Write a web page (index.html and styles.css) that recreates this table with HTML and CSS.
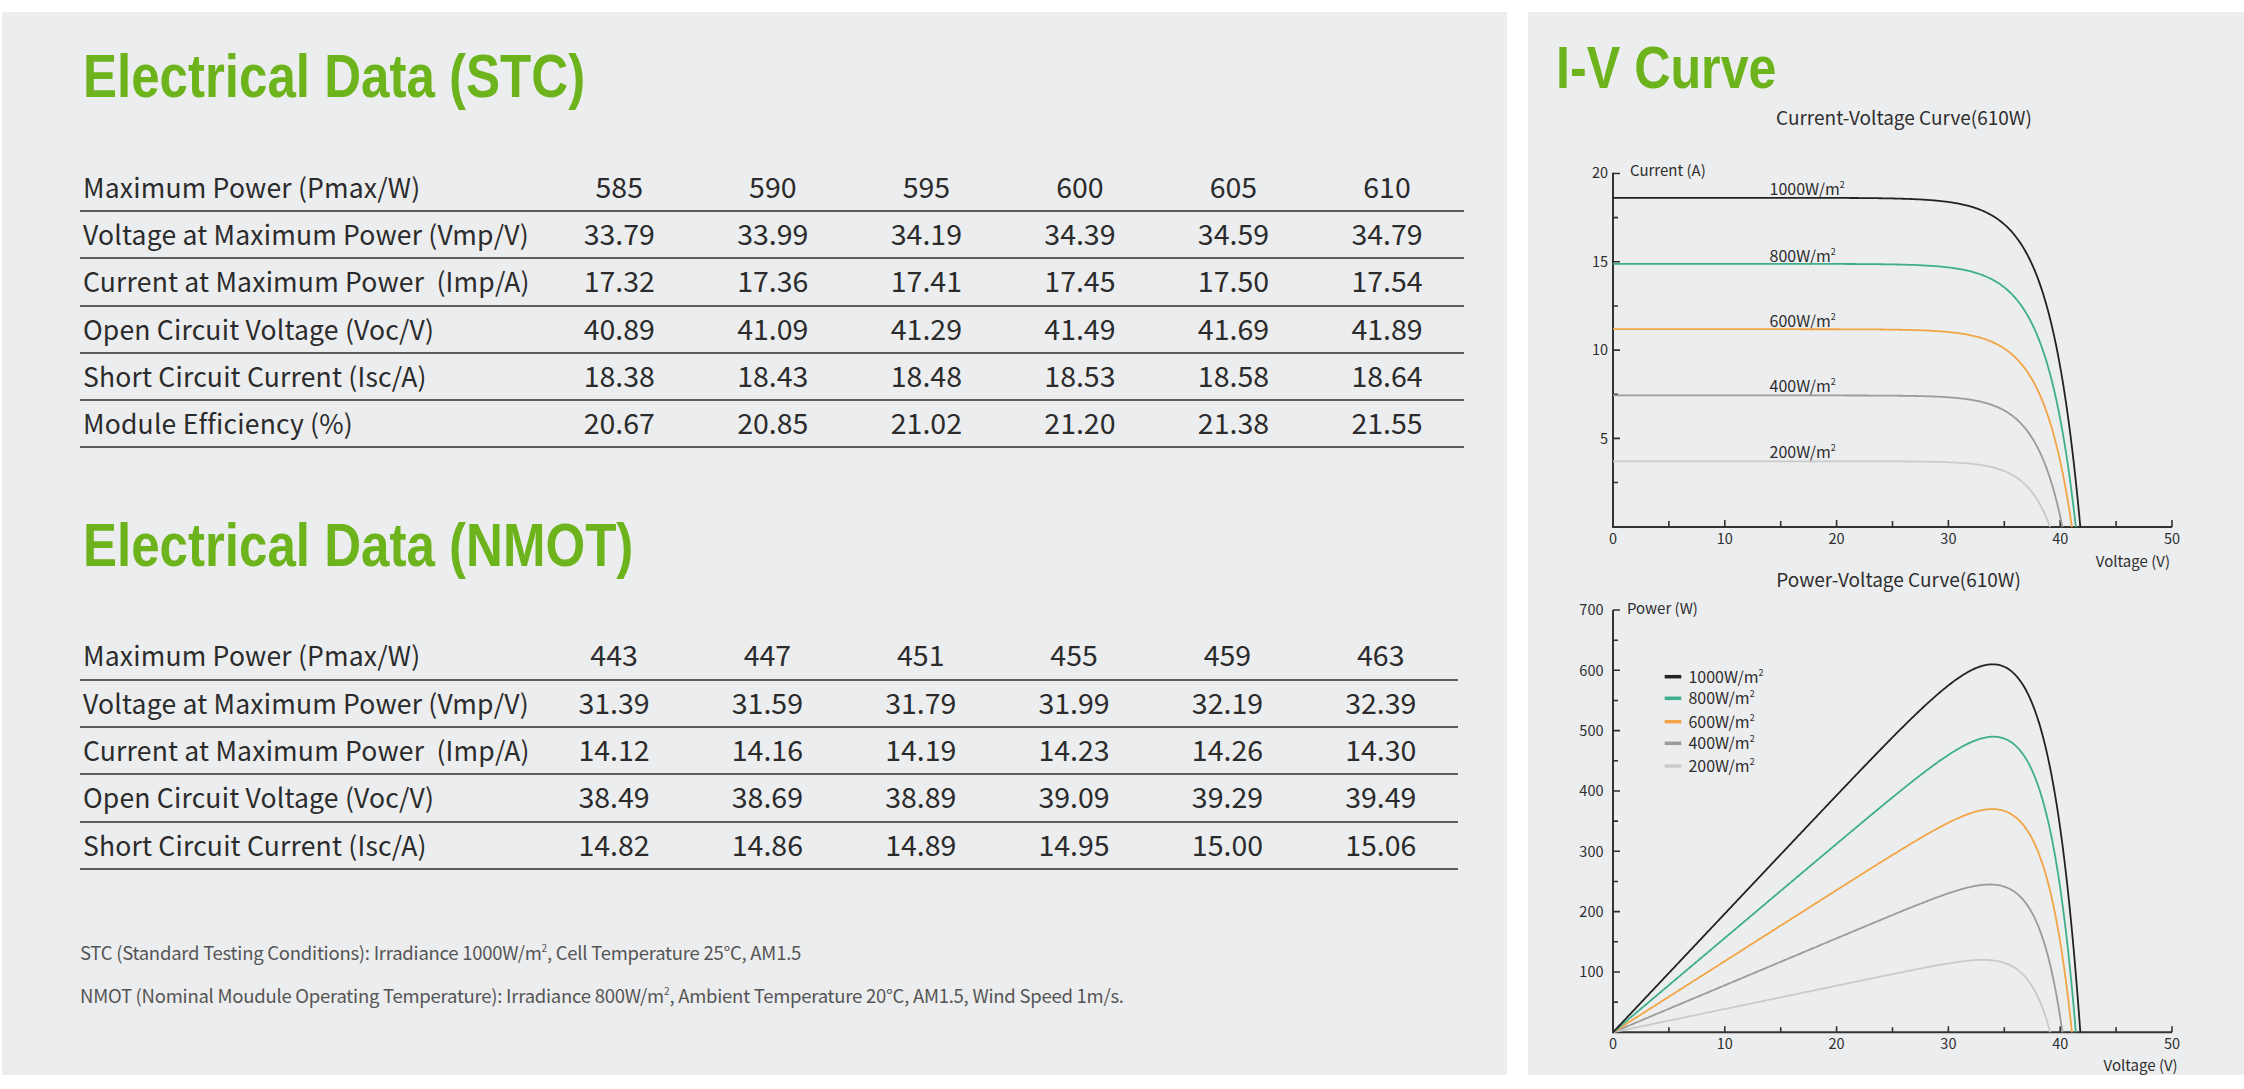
FILE: index.html
```html
<!DOCTYPE html>
<html lang="en">
<head>
<meta charset="utf-8">
<title>Electrical Data</title>
<link rel="stylesheet" href="styles.css">
</head>
<body>
<main class="page">
  <section class="panel panel-data">
    <h1 class="title">Electrical Data (STC)</h1>
    <div class="spec spec-stc">
      <div class="row"><span class="label">Maximum Power (Pmax/W)</span><span class="val">585</span><span class="val">590</span><span class="val">595</span><span class="val">600</span><span class="val">605</span><span class="val">610</span></div>
      <div class="row"><span class="label">Voltage at Maximum Power (Vmp/V)</span><span class="val">33.79</span><span class="val">33.99</span><span class="val">34.19</span><span class="val">34.39</span><span class="val">34.59</span><span class="val">34.79</span></div>
      <div class="row"><span class="label">Current at Maximum Power  (Imp/A)</span><span class="val">17.32</span><span class="val">17.36</span><span class="val">17.41</span><span class="val">17.45</span><span class="val">17.50</span><span class="val">17.54</span></div>
      <div class="row"><span class="label">Open Circuit Voltage (Voc/V)</span><span class="val">40.89</span><span class="val">41.09</span><span class="val">41.29</span><span class="val">41.49</span><span class="val">41.69</span><span class="val">41.89</span></div>
      <div class="row"><span class="label">Short Circuit Current (Isc/A)</span><span class="val">18.38</span><span class="val">18.43</span><span class="val">18.48</span><span class="val">18.53</span><span class="val">18.58</span><span class="val">18.64</span></div>
      <div class="row"><span class="label">Module Efficiency (%)</span><span class="val">20.67</span><span class="val">20.85</span><span class="val">21.02</span><span class="val">21.20</span><span class="val">21.38</span><span class="val">21.55</span></div>
    </div>

    <h1 class="title title-nmot">Electrical Data (NMOT)</h1>
    <div class="spec spec-nmot">
      <div class="row"><span class="label">Maximum Power (Pmax/W)</span><span class="val">443</span><span class="val">447</span><span class="val">451</span><span class="val">455</span><span class="val">459</span><span class="val">463</span></div>
      <div class="row"><span class="label">Voltage at Maximum Power (Vmp/V)</span><span class="val">31.39</span><span class="val">31.59</span><span class="val">31.79</span><span class="val">31.99</span><span class="val">32.19</span><span class="val">32.39</span></div>
      <div class="row"><span class="label">Current at Maximum Power  (Imp/A)</span><span class="val">14.12</span><span class="val">14.16</span><span class="val">14.19</span><span class="val">14.23</span><span class="val">14.26</span><span class="val">14.30</span></div>
      <div class="row"><span class="label">Open Circuit Voltage (Voc/V)</span><span class="val">38.49</span><span class="val">38.69</span><span class="val">38.89</span><span class="val">39.09</span><span class="val">39.29</span><span class="val">39.49</span></div>
      <div class="row"><span class="label">Short Circuit Current (Isc/A)</span><span class="val">14.82</span><span class="val">14.86</span><span class="val">14.89</span><span class="val">14.95</span><span class="val">15.00</span><span class="val">15.06</span></div>
    </div>

    <div class="notes">
      <p>STC (Standard Testing Conditions): Irradiance 1000W/m<sup>2</sup>, Cell Temperature 25°C, AM1.5</p>
      <p>NMOT (Nominal Moudule Operating Temperature): Irradiance 800W/m<sup>2</sup>, Ambient Temperature 20°C, AM1.5, Wind Speed 1m/s.</p>
    </div>
  </section>

  <section class="panel panel-curves">
    <h2 class="title title-iv">I-V Curve</h2>
    <svg class="charts" width="716" height="975" viewBox="1528 100 716 975" xmlns="http://www.w3.org/2000/svg">
      <!-- Current-Voltage chart -->
      <text class="ct" x="1904" y="125" text-anchor="middle">Current-Voltage Curve(610W)</text>
      <text class="ax" x="1630" y="176">Current (A)</text>
      <path class="axis" d="M1613 172.7 V527 H2172"/>
      <path class="tick" d="M1613 173.5h7 M1613 261.8h7 M1613 350.1h7 M1613 438.4h7 M1613 217.6h5 M1613 306h5 M1613 394.2h5 M1613 482.5h5"/>
      <path class="tick" d="M1724.8 527v-7 M1836.6 527v-7 M1948.4 527v-7 M2060.2 527v-7 M2172 527v-7 M1668.9 527v-6 M1780.7 527v-6 M1892.5 527v-6 M2004.3 527v-6 M2116.1 527v-6"/>
      <g class="tk" text-anchor="end">
        <text x="1608" y="178">20</text>
        <text x="1608" y="267">15</text>
        <text x="1608" y="355.4">10</text>
        <text x="1608" y="443.7">5</text>
      </g>
      <g class="tk" text-anchor="middle">
        <text x="1613" y="543.5">0</text>
        <text x="1724.8" y="543.5">10</text>
        <text x="1836.6" y="543.5">20</text>
        <text x="1948.4" y="543.5">30</text>
        <text x="2060.2" y="543.5">40</text>
        <text x="2172" y="543.5">50</text>
      </g>
      <text class="ax" x="2170" y="567" text-anchor="end">Voltage (V)</text>
      <g class="lb">
        <text x="1769.6" y="195.2">1000W/m<tspan class="sup" dy="-7">2</tspan></text>
        <text x="1769.6" y="261.6">800W/m<tspan class="sup" dy="-7">2</tspan></text>
        <text x="1769.6" y="326.9">600W/m<tspan class="sup" dy="-7">2</tspan></text>
        <text x="1769.6" y="391.9">400W/m<tspan class="sup" dy="-7">2</tspan></text>
        <text x="1769.6" y="457.6">200W/m<tspan class="sup" dy="-7">2</tspan></text>
      </g>
      <path id="iv-l" class="crv c-l"/>
      <path id="iv-d" class="crv c-d"/>
      <path id="iv-o" class="crv c-o"/>
      <path id="iv-g" class="crv c-g"/>
      <path id="iv-k" class="crv c-k"/>

      <!-- Power-Voltage chart -->
      <text class="ct" x="1898.6" y="586.5" text-anchor="middle">Power-Voltage Curve(610W)</text>
      <text class="ax" x="1627" y="613.5">Power (W)</text>
      <path class="axis" d="M1613 610 V1032.3 H2172"/>
      <path class="tick" d="M1613 610h7 M1613 670.3h7 M1613 730.6h7 M1613 791h7 M1613 851.3h7 M1613 911.6h7 M1613 972h7 M1613 640.2h5 M1613 700.5h5 M1613 760.8h5 M1613 821.1h5 M1613 881.5h5 M1613 941.8h5 M1613 1002.1h5"/>
      <path class="tick" d="M1724.8 1032.3v-6 M1836.6 1032.3v-6 M1948.4 1032.3v-6 M2060.2 1032.3v-6 M2172 1032.3v-6 M1668.9 1032.3v-5 M1780.7 1032.3v-5 M1892.5 1032.3v-5 M2004.3 1032.3v-5 M2116.1 1032.3v-5"/>
      <g class="tk" text-anchor="end">
        <text x="1603.5" y="615.3">700</text>
        <text x="1603.5" y="675.6">600</text>
        <text x="1603.5" y="735.9">500</text>
        <text x="1603.5" y="796.3">400</text>
        <text x="1603.5" y="856.6">300</text>
        <text x="1603.5" y="916.9">200</text>
        <text x="1603.5" y="977.3">100</text>
      </g>
      <g class="tk" text-anchor="middle">
        <text x="1613" y="1049.3">0</text>
        <text x="1724.8" y="1049.3">10</text>
        <text x="1836.6" y="1049.3">20</text>
        <text x="1948.4" y="1049.3">30</text>
        <text x="2060.2" y="1049.3">40</text>
        <text x="2172" y="1049.3">50</text>
      </g>
      <text class="ax" x="2177.7" y="1070.5" text-anchor="end">Voltage (V)</text>
      <g class="legend">
        <path class="lg-line c-k" d="M1664.7 676.7 H1681.3"/>
        <path class="lg-line c-g" d="M1664.7 698.3 H1681.3"/>
        <path class="lg-line c-o" d="M1664.7 721.7 H1681.3"/>
        <path class="lg-line c-d" d="M1664.7 743.3 H1681.3"/>
        <path class="lg-line c-l" d="M1664.7 766 H1681.3"/>
      </g>
      <g class="lb">
        <text x="1688.4" y="682.5">1000W/m<tspan class="sup" dy="-7">2</tspan></text>
        <text x="1688.4" y="704.1">800W/m<tspan class="sup" dy="-7">2</tspan></text>
        <text x="1688.4" y="727.5">600W/m<tspan class="sup" dy="-7">2</tspan></text>
        <text x="1688.4" y="749.1">400W/m<tspan class="sup" dy="-7">2</tspan></text>
        <text x="1688.4" y="771.8">200W/m<tspan class="sup" dy="-7">2</tspan></text>
      </g>
      <path id="pv-l" class="crv c-l"/>
      <path id="pv-d" class="crv c-d"/>
      <path id="pv-o" class="crv c-o"/>
      <path id="pv-g" class="crv c-g"/>
      <path id="pv-k" class="crv c-k"/>
    </svg>
  </section>
</main>
<script src="script.js"></script>
</body>
</html>
```

FILE: styles.css
```css
* { box-sizing: border-box; }

html, body {
  margin: 0;
  padding: 0;
  background: #ffffff;
}

.page {
  display: flex;
  gap: 21px;
  padding: 12px 0 14px 2px;
}

.panel {
  background: #ecedef;
  height: 1063px;
}

.panel-data {
  flex: none;
  width: 1505px;
  padding: 34.3px 0 0 78px;
}

.panel-curves {
  flex: 1;
  padding-top: 25px;
}

.title {
  margin: 0;
  padding-left: 3.5px;
  font-family: "Liberation Sans", Arial, sans-serif;
  font-weight: 700;
  font-size: 61px;
  line-height: 61px;
  color: #6cb31c;
  white-space: nowrap;
  transform: scaleX(0.837);
  transform-origin: 0 0;
}

.title-iv {
  font-size: 60px;
  padding-left: 33.5px;
}

.title-nmot {
  margin-top: 66.8px;
}

.spec {
  margin-top: 57.4px;
  font-family: "Noto Sans CJK SC", "Noto Sans", sans-serif;
  color: #2b2b2b;
}

.spec-stc {
  width: 1383.8px;
}

.spec-nmot {
  width: 1377.5px;
  margin-top: 57.1px;
}

.row {
  display: grid;
  align-items: baseline;
  height: 47.3px;
  border-bottom: 2px solid #5e5e5e;
}

.spec-stc .row {
  grid-template-columns: 462.5px repeat(6, 153.55px);
}

.spec-nmot .row {
  grid-template-columns: 457.4px repeat(6, 153.35px);
}

.label {
  font-size: 26.5px;
  line-height: 41px;
  letter-spacing: 0.2px;
  padding-left: 3px;
  white-space: pre;
}

.val {
  font-size: 28.5px;
  line-height: 41px;
  text-align: center;
}

.notes {
  margin-top: 61.1px;
  font-family: "Noto Sans CJK SC", "Noto Sans", sans-serif;
  font-size: 18.5px;
  line-height: 43.3px;
  letter-spacing: -0.25px;
  color: #555555;
}

.notes p {
  margin: 0;
  white-space: nowrap;
}

.notes sup {
  font-size: 0.55em;
  line-height: 0;
  vertical-align: 0.8em;
}

.charts {
  display: block;
  margin-top: 2px;
}

.charts text {
  font-family: "Noto Sans CJK SC", "Noto Sans", sans-serif;
  fill: #2e2e2e;
}

.charts .ct { font-size: 19px; }
.charts .ax { font-size: 15px; }
.charts .tk text { font-size: 14.5px; }
.charts .lb text { font-size: 16px; }
.charts .sup { font-size: 9px; }

.axis {
  fill: none;
  stroke: #333333;
  stroke-width: 2;
}

.tick {
  fill: none;
  stroke: #333333;
  stroke-width: 1.6;
}

.crv {
  fill: none;
  stroke-width: 1.8;
  stroke-linejoin: round;
}

.lg-line {
  fill: none;
  stroke-width: 3.5;
}

.c-k { stroke: #222222; }
.c-g { stroke: #3fae8b; }
.c-o { stroke: #f1a546; }
.c-d { stroke: #9b9b9b; }
.c-l { stroke: #cacaca; }
```

FILE: script.js
```js
(function () {
  var X0 = 1613, XS = 11.18;           // px per volt
  var IV_BASE = 527, IV_S = 17.66;     // px per amp
  var PV_BASE = 1032.3, PV_S = 0.6033; // px per watt
  var curves = [
    { id: 'k', isc: 18.64, voc: 41.8,  vt: 2.7,  pvt: 3.2,  peak: 610 },
    { id: 'g', isc: 14.9,  voc: 41.4,  vt: 2.65, pvt: 2.9,  peak: 490 },
    { id: 'o', isc: 11.2,  voc: 41.05, vt: 2.6,  pvt: 2.75, peak: 370 },
    { id: 'd', isc: 7.45,  voc: 40.2,  vt: 2.4,  pvt: 2.4,  peak: 245 },
    { id: 'l', isc: 3.72,  voc: 39.1,  vt: 2.15, pvt: 2.15, peak: 120 }
  ];
  function sample(c, vt) {
    var pts = [];
    for (var v = 0; v < c.voc; v += 0.1) pts.push(v);
    pts.push(c.voc);
    return pts.map(function (v) {
      var i = c.isc * (1 - Math.exp((v - c.voc) / vt));
      if (i < 0) i = 0;
      return { v: v, i: i, p: v * i };
    });
  }
  curves.forEach(function (c) {
    var iv = sample(c, c.vt);
    var pv = sample(c, c.pvt);
    var maxP = 0;
    pv.forEach(function (q) { if (q.p > maxP) maxP = q.p; });
    var k = c.peak / maxP;
    var ivd = '', pvd = '';
    iv.forEach(function (q, n) {
      ivd += (n ? 'L' : 'M') + (X0 + q.v * XS).toFixed(2) + ' ' + (IV_BASE - q.i * IV_S).toFixed(2);
    });
    pv.forEach(function (q, n) {
      pvd += (n ? 'L' : 'M') + (X0 + q.v * XS).toFixed(2) + ' ' + (PV_BASE - q.p * k * PV_S).toFixed(2);
    });
    document.getElementById('iv-' + c.id).setAttribute('d', ivd);
    document.getElementById('pv-' + c.id).setAttribute('d', pvd);
  });
})();
```
